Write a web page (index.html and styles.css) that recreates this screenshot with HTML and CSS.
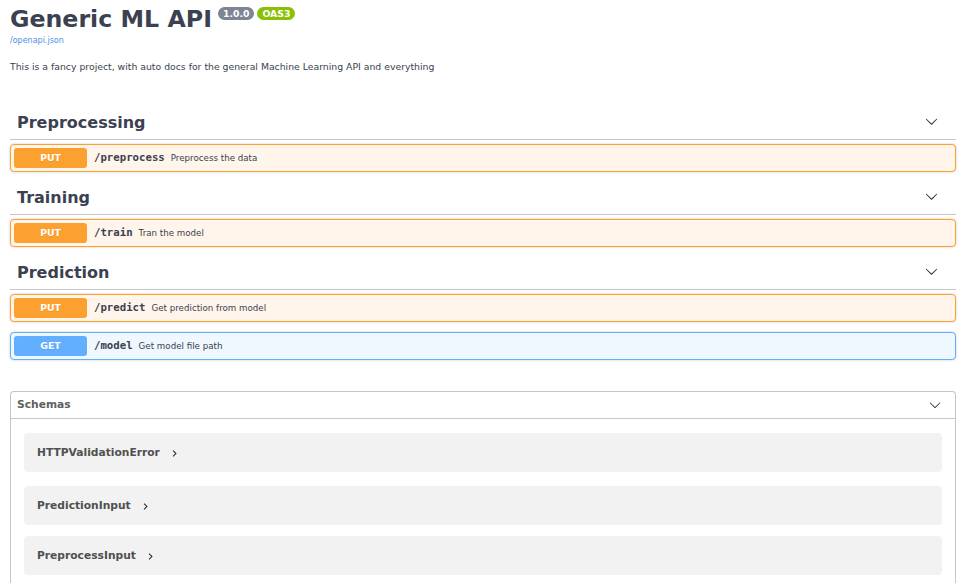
FILE: index.html
```html
<!DOCTYPE html>
<html lang="en">
<head>
<meta charset="utf-8">
<title>Generic ML API - Swagger UI</title>
<link rel="stylesheet" href="styles.css">
</head>
<body>
<div class="wrapper">
  <div class="info">
    <h2 class="title">Generic ML API<span class="badges"><span class="badge version">1.0.0</span><span class="badge oas">OAS3</span></span></h2>
    <a class="base-url" href="#">/openapi.json</a>
    <p class="desc">This is a fancy project, with auto docs for the general Machine Learning API and everything</p>
  </div>

  <section class="tag">
    <h3 class="tag-head"><span class="tag-name">Preprocessing</span>
      <svg class="tag-arrow" viewBox="0 0 20 20"><path d="M17.418 6.109c.272-.268.709-.268.979 0s.271.701 0 .969l-7.908 7.83c-.27.268-.707.268-.979 0l-7.908-7.830c-.27-.268-.27-.701 0-.969.271-.268.709-.268.979 0L10 13.25l7.418-7.141z"/></svg>
    </h3>
    <div class="opblock put">
      <span class="method">PUT</span><span class="path">/preprocess</span><span class="summary">Preprocess the data</span>
    </div>
  </section>

  <section class="tag">
    <h3 class="tag-head"><span class="tag-name">Training</span>
      <svg class="tag-arrow" viewBox="0 0 20 20"><path d="M17.418 6.109c.272-.268.709-.268.979 0s.271.701 0 .969l-7.908 7.83c-.27.268-.707.268-.979 0l-7.908-7.830c-.27-.268-.27-.701 0-.969.271-.268.709-.268.979 0L10 13.25l7.418-7.141z"/></svg>
    </h3>
    <div class="opblock put">
      <span class="method">PUT</span><span class="path">/train</span><span class="summary">Tran the model</span>
    </div>
  </section>

  <section class="tag">
    <h3 class="tag-head"><span class="tag-name">Prediction</span>
      <svg class="tag-arrow" viewBox="0 0 20 20"><path d="M17.418 6.109c.272-.268.709-.268.979 0s.271.701 0 .969l-7.908 7.83c-.27.268-.707.268-.979 0l-7.908-7.830c-.27-.268-.27-.701 0-.969.271-.268.709-.268.979 0L10 13.25l7.418-7.141z"/></svg>
    </h3>
    <div class="opblock put">
      <span class="method">PUT</span><span class="path">/predict</span><span class="summary">Get prediction from model</span>
    </div>
    <div class="opblock get">
      <span class="method">GET</span><span class="path">/model</span><span class="summary">Get model file path</span>
    </div>
  </section>

  <section class="models">
    <h4 class="models-head"><span>Schemas</span>
      <svg class="models-arrow" viewBox="0 0 20 20"><path d="M17.418 6.109c.272-.268.709-.268.979 0s.271.701 0 .969l-7.908 7.83c-.27.268-.707.268-.979 0l-7.908-7.830c-.27-.268-.27-.701 0-.969.271-.268.709-.268.979 0L10 13.25l7.418-7.141z"/></svg>
    </h4>
    <div class="model-list">
      <div class="model-box"><span class="model-title">HTTPValidationError</span><svg class="model-toggle" viewBox="0 0 24 24"><path d="M10 6L8.59 7.41 13.17 12l-4.58 4.59L10 18l6-6z"/></svg></div>
      <div class="model-box"><span class="model-title">PredictionInput</span><svg class="model-toggle" viewBox="0 0 24 24"><path d="M10 6L8.59 7.41 13.17 12l-4.58 4.59L10 18l6-6z"/></svg></div>
      <div class="model-box"><span class="model-title">PreprocessInput</span><svg class="model-toggle" viewBox="0 0 24 24"><path d="M10 6L8.59 7.41 13.17 12l-4.58 4.59L10 18l6-6z"/></svg></div>
    </div>
  </section>
</div>
</body>
</html>
```

FILE: styles.css
```css
* { box-sizing: border-box; }
html, body { margin: 0; padding: 0; background: #fff; }
body {
  font-family: "DejaVu Sans", "Noto Sans", sans-serif;
  color: #3b4151;
}
.wrapper { padding: 0 11px 0 10px; }

/* info */
.info { padding-top: 5px; }
.title {
  margin: 0;
  display: flex;
  align-items: flex-start;
  font-size: 23.7px;
  line-height: 28px;
  font-weight: 700;
  color: #3b4151;
}
.badges { display: flex; gap: 3px; margin-left: 6px; margin-top: 2px; }
.badge {
  display: block;
  font-size: 9.3px;
  line-height: 13px;
  height: 13px;
  padding: 0 5px;
  border-radius: 8px;
  color: #fff;
  font-weight: 700;
}
.badge.version { background: #7d8492; }
.badge.oas { background: #89bf04; }
.base-url {
  display: block;
  margin-top: 2px;
  font-size: 8px;
  line-height: 12px;
  color: #4990e2;
  text-decoration: none;
}
.desc {
  margin: 13px 0 0;
  font-size: 9.3px;
  line-height: 14px;
  color: #3b4151;
}

/* tags */
.tag:first-of-type { margin-top: 33px; }
.tag-head {
  margin: 0 0 4px;
  display: flex;
  align-items: center;
  justify-content: space-between;
  height: 33px;
  padding: 7px 18px 7px 7px;
  border-bottom: 1px solid rgba(59, 65, 81, .3);
  font-size: 16px;
  line-height: 18px;
  font-weight: 700;
  color: #3b4151;
}
.tag-arrow { width: 13px; height: 13px; margin-top: -3px; fill: #303030; }

.opblock {
  display: flex;
  align-items: center;
  height: 28px;
  padding: 0 3px;
  margin-bottom: 10px;
  border: 1px solid;
  border-radius: 4px;
  box-shadow: 0 0 3px rgba(0, 0, 0, .19);
}
.opblock.put { background: #fff5ea; border-color: #fca130; }
.opblock.get { background: #eff7ff; border-color: #61affe; }
.method {
  width: 73px;
  height: 20px;
  line-height: 20px;
  border-radius: 3px;
  text-align: center;
  color: #fff;
  font-size: 9.3px;
  font-weight: 700;
  text-shadow: 0 1px 0 rgba(0, 0, 0, .1);
}
.put .method { background: #fca130; }
.get .method { background: #61affe; }
.path {
  padding: 0 6px 0 7px;
  margin-top: -1px;
  font-family: "DejaVu Sans Mono", "Liberation Mono", monospace;
  font-size: 10.7px;
  font-weight: 700;
  color: #3b4151;
}
.summary { font-size: 8.7px; margin-top: -1px; color: #3b4151; }

/* models */
.models {
  margin-top: 31px;
  border: 1px solid rgba(59, 65, 81, .3);
  border-bottom: 0;
  border-radius: 4px 4px 0 0;
}
.models-head {
  margin: 0;
  display: flex;
  align-items: center;
  justify-content: space-between;
  height: 27px;
  padding: 4px 14px 4px 6px;
  border-bottom: 1px solid rgba(59, 65, 81, .3);
  font-size: 10.7px;
  line-height: 18px;
  font-weight: 700;
  color: #606060;
}
.models-arrow { width: 12px; height: 12px; fill: #303030; }
.model-list { padding: 14px 13px 9px; }
.model-box {
  display: flex;
  align-items: center;
  height: 39px;
  padding: 0 13px;
  margin-bottom: 12px;
  background: rgba(0, 0, 0, .05);
  border-radius: 4px;
}
.model-box:nth-child(1) { margin-bottom: 14px; }
.model-box:nth-child(2) { margin-bottom: 11px; }
.model-box:last-child { margin-bottom: 0; }
.model-title {
  font-size: 10.7px;
  font-weight: 700;
  color: #505050;
}
.model-toggle { width: 13px; height: 13px; margin-left: 8px; margin-top: 1px; fill: #303030; }
```
